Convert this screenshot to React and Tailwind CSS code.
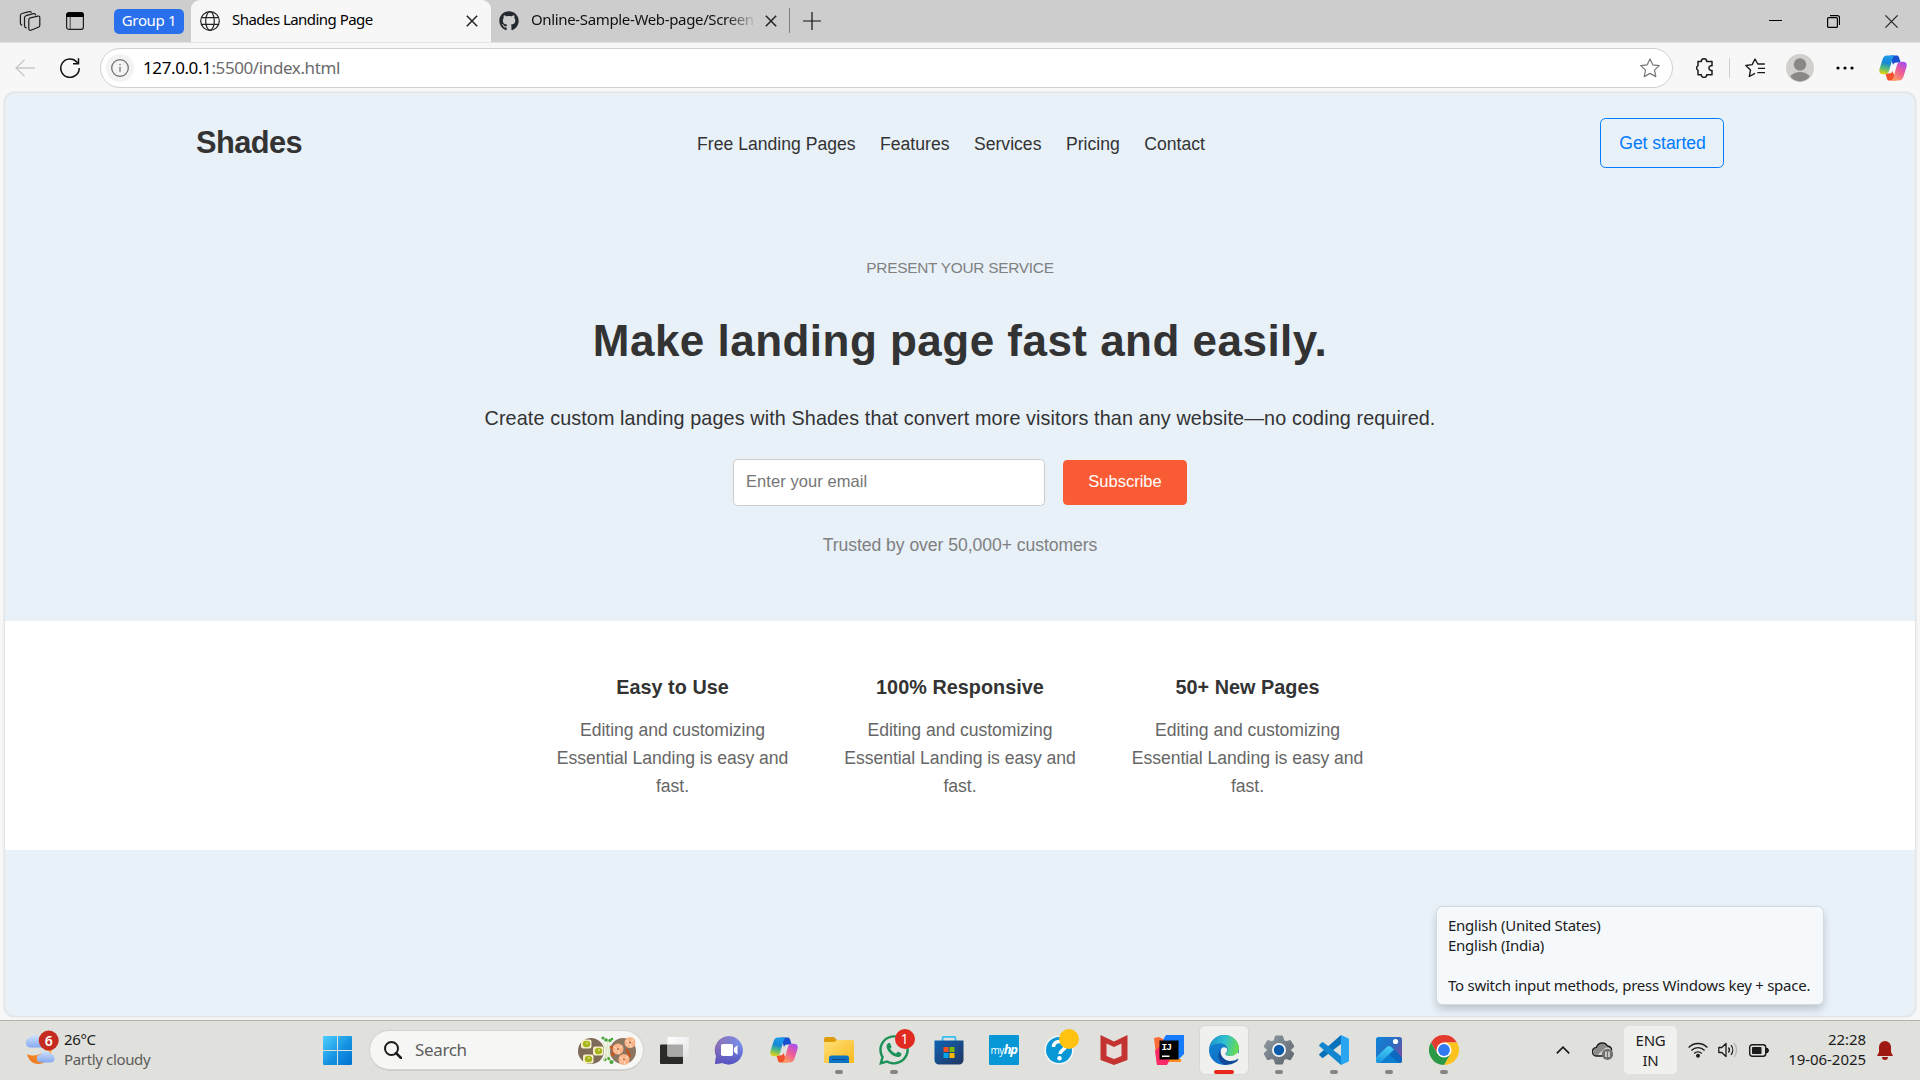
import React from "react";
import { FaWhatsapp, FaGithub } from "react-icons/fa";

function CopilotIcon({ id, className }) {
  return (
    <svg viewBox="0 0 28 26" className={className}>
      <defs>
        <linearGradient id={id + "a"} x1=".3" y1="0" x2="0.1" y2="1">
          <stop offset="0" stopColor="#1b9be8" />
          <stop offset=".35" stopColor="#1787d6" />
          <stop offset=".62" stopColor="#4fb884" />
          <stop offset="1" stopColor="#f6d600" />
        </linearGradient>
        <linearGradient id={id + "b"} x1=".8" y1="0" x2=".2" y2="1">
          <stop offset="0" stopColor="#a64df0" />
          <stop offset=".45" stopColor="#ec5a9b" />
          <stop offset="1" stopColor="#ffa35e" />
        </linearGradient>
      </defs>
      <path d="M11 .5h6.500c1.300 0 2.100.6 2.500 1.800l1.600 5.200h-4c-2 0-3 .8-3.600 2.500z" fill="#1a4fd0" />
      <path d="M17 25.500h-6.500c-1.300 0-2.100-.6-2.500-1.800L6.400 18.500H10c2 0 3-.8 3.600-2.500z" fill="#f4502c" />
      <path d="M8 .5h8.200c-1.700.5-2.300 2-2.900 4L10.200 15.500c-.8 2.500-2 3.700-4.400 3.700H4.500C.8 19.200-.3 17.300.5 14L3.500 4.500C4.400 2 5.600.5 8 .5z" fill={`url(#${id}a)`} />
      <path d="M20 25.500h-8.200c1.700-.5 2.300-2 2.900-4l3.100-11c.8-2.500 2-3.700 4.400-3.700h1.300c3.700 0 4.800 1.900 4 5.200l-3 9.500c-.9 2.500-2.100 4-4.500 4z" fill={`url(#${id}b)`} />
    </svg>
  );
}

const CloseIcon = () => (
  <svg viewBox="0 0 12 12" className="h-3 w-3 shrink-0" stroke="#222" strokeWidth="1.500" fill="none">
    <path d="M.8.8l10.400 10.400M11.200.8L.8 11.200" />
  </svg>
);

function TabStrip() {
  return (
    <div className="flex h-[42px] items-start bg-[#cdcdcd]">
      <div className="flex h-[42px] w-[191px] items-center bg-[#cdcdcd]">
        <svg viewBox="0 0 22 22" className="ml-[19px] h-[22px] w-[22px]" fill="none" stroke="#1c1c1c" strokeWidth="1.200" strokeLinejoin="round" strokeLinecap="round">
          <path d="M10.500 8.200l8.400-2.100c1.200-.3 1.900.3 1.900 1.400v7.800c0 1-.5 1.700-1.500 2L12 20.200c-1.300.4-2.200-.2-2.200-1.500v-8.500c0-1 .2-1.700.7-2z" />
          <path d="M16.500 4.800c-.2-1-.9-1.400-2-1.100L7 5.700c-1 .3-1.500.9-1.500 1.900v8.200c0 1 .6 1.700 1.700 2" />
          <path d="M12.200 2.500c-.3-.8-1-1.200-2-.9L3 3.500C1.900 3.800 1.400 4.500 1.400 5.500v7.700c0 1 .5 1.600 1.400 1.900" />
        </svg>
        <svg viewBox="0 0 18 18" className="ml-[25px] h-[18px] w-[18px]">
          <rect x=".6" y=".6" width="16.800" height="16.800" rx="2.500" fill="none" stroke="#1c1c1c" strokeWidth="1.200" />
          <path d="M.2 3a2.800 2.800 0 012.800-2.800h12a2.800 2.800 0 012.800 2.800v2H.2z" fill="#000" />
          <path d="M4.200 5v12.500" stroke="#444" strokeWidth="1" />
        </svg>
        <div className="ml-[30px] flex h-[25px] w-[70px] items-center justify-center rounded-[5px] bg-[#2a6fec] pb-px font-['Noto_Sans',sans-serif] text-[15px] tracking-[-0.35px] whitespace-nowrap text-white">Group 1</div>
      </div>
      <div className="flex h-[42px] w-[300px] shrink-0 items-center rounded-t-[9px] bg-[#f7f7f7] pb-px">
        <svg viewBox="0 0 20 20" className="ml-[9px] h-5 w-5" fill="none" stroke="#222" strokeWidth="1.200">
          <circle cx="10" cy="10" r="9.300" />
          <ellipse cx="10" cy="10" rx="4.300" ry="9.300" />
          <path d="M1.500 6.700h17M1.500 13.300h17" />
        </svg>
        <div className="ml-3 w-[234px] pb-[2px] font-['Noto_Sans',sans-serif] text-[15px] tracking-[-0.54px] whitespace-nowrap text-black">Shades Landing Page</div>
        <CloseIcon />
      </div>
      <div className="flex h-[41px] items-center">
        <FaGithub className="ml-2 h-5 w-5 text-[#24292f]" />
        <div className="ml-3 w-[224px] overflow-hidden pb-[2px] font-['Noto_Sans',sans-serif] text-[15px] tracking-[-0.35px] whitespace-nowrap text-[#111] [mask-image:linear-gradient(to_right,black_195px,transparent_226px)]">Online-Sample-Web-page/Screen</div>
        <div className="ml-[10px]"><CloseIcon /></div>
        <div className="ml-3 h-[25px] w-px bg-[#808080]" />
        <svg viewBox="0 0 18 18" className="ml-[13px] h-[18px] w-[18px]" stroke="#111" strokeWidth="1.200"><path d="M9 0v18M0 9h18" /></svg>
      </div>
      <div className="ml-auto flex h-[42px] items-center gap-[45px] pr-[22px]">
        <svg viewBox="0 0 13 13" className="h-[13px] w-[13px]" stroke="#000"><path d="M0 5.500h13" /></svg>
        <svg viewBox="0 0 13 13" className="h-[13px] w-[13px]" stroke="#000" strokeWidth="1.200" fill="none">
          <rect x=".6" y="2.600" width="9.800" height="9.800" rx="1" />
          <path d="M3 .6h7.500a2 2 0 012 2V10" />
        </svg>
        <svg viewBox="0 0 13 13" className="h-[13px] w-[13px]" stroke="#222" strokeWidth="1.200"><path d="M.4.4l12.200 12.200M12.600.4L.4 12.600" /></svg>
      </div>
    </div>
  );
}

function Toolbar() {
  return (
    <div className="flex h-[51px] items-center border-t border-[#e4e4e4] bg-[#f7f7f7]">
      <svg viewBox="0 0 20 18" className="ml-[15px] h-[18px] w-5" fill="none" stroke="#c8c8c8" strokeWidth="1.300"><path d="M20 9H1M9.500.7L1 9l8.500 8.300" /></svg>
      <svg viewBox="0 0 20 20" className="ml-[25px] h-5 w-5" fill="none" stroke="#111" strokeWidth="1.500">
        <path d="M19.200 10A9.200 9.200 0 1117 4.200L18.300 5.600" />
        <path d="M18.500.3v5.500H13" />
      </svg>
      <div className="ml-5 flex h-10 w-[1573px] items-center rounded-full border border-[#cfcfcf] bg-white">
        <div className="ml-[5px] flex h-7 w-7 items-center justify-center rounded-full bg-[#f3f3f3]">
          <svg viewBox="0 0 18 18" className="h-[18px] w-[18px]" fill="none" stroke="#6a6a6a" strokeWidth="1.200">
            <circle cx="9" cy="9" r="8.300" /><path d="M9 7.800v5M9 4.900v1.300" />
          </svg>
        </div>
        <div className="ml-[9px] font-['Noto_Sans',sans-serif] text-[17px] tracking-[-0.4px] whitespace-nowrap text-[#6b6b6b]"><span className="text-black">127.0.0.1</span>:5500/index.html</div>
        <svg viewBox="0 0 20 20" className="mr-[12px] ml-auto h-5 w-5" fill="none" stroke="#777" strokeWidth="1.200" strokeLinejoin="round">
          <path d="M10 .9l2.800 5.900 6.500.8-4.800 4.500 1.300 6.500L10 15.400l-5.800 3.200 1.300-6.500L.7 7.600l6.500-.8z" />
        </svg>
      </div>
      <svg viewBox="0 0 20 20" className="ml-[21px] h-5 w-5 shrink-0" fill="none" stroke="#1b1b1b" strokeWidth="1.500" strokeLinejoin="round">
        <path d="M4 3.500h3.300a2.700 2.700 0 015.400 0H18v4.200h-1.200a2.400 2.400 0 000 4.700H18v4.300h-5.300a2.700 2.700 0 01-5.400 0H4v-4.300a2.700 2.700 0 010-4.700z" />
      </svg>
      <div className="ml-[15px] h-5 w-px bg-[#cfcfcf]" />
      <svg viewBox="0 0 20 20" className="ml-[15px] h-5 w-5 shrink-0" fill="none" stroke="#1b1b1b" strokeWidth="1.400" strokeLinejoin="round">
        <path d="M19.800 6H12.800L10 1 7.200 6.600.8 7.500l4.700 4.600-1.200 6.400L10 15.400" />
        <path d="M13 10.400h7M12.300 14.600H20" />
      </svg>
      <svg viewBox="0 0 28 28" className="ml-[21px] h-7 w-7 shrink-0">
        <circle cx="14" cy="14" r="14" fill="#d2d0cd" />
        <circle cx="14" cy="10.500" r="6.200" fill="#8b8785" />
        <path d="M4.300 22.500c2-3 5.500-4.500 9.700-4.500s7.700 1.500 9.700 4.500A14 14 0 0114 27.500a14 14 0 01-9.700-5z" fill="#8b8785" />
      </svg>
      <svg viewBox="0 0 18 4" className="ml-[22px] h-1 w-[18px]"><circle cx="2" cy="2" r="1.600" /><circle cx="9" cy="2" r="1.600" /><circle cx="16" cy="2" r="1.600" /></svg>
      <CopilotIcon id="tb" className="ml-[25px] h-[26px] w-7" />
    </div>
  );
}

function Card({ title }) {
  return (
    <div className="w-[242px] text-center">
      <h3 className="text-[19.8px] leading-8 font-bold tracking-[0.05px] text-[#333]">{title}</h3>
      <p className="mt-[13px] text-[17.6px] leading-[28.16px] tracking-[-0.04px] text-[#666]">Editing and customizing Essential Landing is easy and fast.</p>
    </div>
  );
}

function WebPage() {
  return (
    <div className="mx-[5px] h-[923px] overflow-hidden rounded-[10px] bg-[#e8f0f8] font-['Liberation_Sans',Arial,sans-serif] text-[#333] shadow-[0_0_0_1px_#e2e4e6,0_0_2px_1px_#d4d4d4]">
      <header className="flex h-[100px] items-center justify-between px-[191px]">
        <div className="text-[30.8px] font-bold tracking-[-0.6px]">Shades</div>
        <nav className="flex gap-[24.500px] pt-[3px] text-[17.6px] text-[#333]">
          <a>Free Landing Pages</a><a>Features</a><a>Services</a><a>Pricing</a><a>Contact</a>
        </nav>
        <button className="h-[50px] w-[124px] rounded-[5.500px] border border-[#007bff] pl-px text-[17.6px] tracking-[-0.05px] whitespace-nowrap text-[#007bff]">Get started</button>
      </header>
      <main className="flex h-[428px] flex-col items-center pt-[63px]">
        <p className="text-[15.4px] leading-6 tracking-[-0.25px] text-[#808080]">PRESENT YOUR SERVICE</p>
        <h1 className="mt-[31px] text-[44px] leading-[60px] font-bold tracking-[0.48px]">Make landing page fast and easily.</h1>
        <p className="mt-[31px] text-[19.8px] leading-8 tracking-[0.105px]">Create custom landing pages with Shades that convert more visitors than any website—no coding required.</p>
        <div className="mt-[25px] flex items-center gap-[18px]">
          <input placeholder="Enter your email" className="h-[47px] w-[312px] rounded-[4.400px] border border-[#ccc] bg-white px-3 pb-[3px] text-[16.5px] tracking-[0.07px] placeholder:text-[#757575]" />
          <button className="h-[45px] w-[124px] rounded-[4.400px] bg-[#f95c35] pb-[2px] text-[16.5px] text-white">Subscribe</button>
        </div>
        <p className="mt-[25px] text-[17.6px] leading-7 tracking-[-0.06px] text-[#808080]">Trusted by over 50,000+ customers</p>
      </main>
      <section className="flex h-[229px] justify-center gap-[45.500px] bg-white pt-[50px]">
        <Card title="Easy to Use" /><Card title="100% Responsive" /><Card title="50+ New Pages" />
      </section>
    </div>
  );
}

function TaskbarApp({ children, run, active }) {
  return (
    <div className="flex h-[60px] w-[55px] shrink-0 items-center justify-center">
      <div className={active ? "relative flex h-12 w-12 items-center justify-center rounded-[5px] bg-[#f0f0ee] shadow-[0_0_0_1px_#d8d8d6]" : "relative flex h-12 w-12 items-center justify-center"}>
        {children}
        {run && <div className="absolute bottom-0 left-5 h-1 w-2 rounded-full bg-[#868583]" />}
        {active && <div className="absolute bottom-0 left-[14px] h-1 w-5 rounded-full bg-[#e8281c]" />}
      </div>
    </div>
  );
}

function Taskbar() {
  const ic = "h-[30px] w-[30px]";
  return (
    <footer className="flex h-[60px] items-center bg-[#e0e0dc] font-['Noto_Sans',sans-serif] shadow-[inset_0_1px_0_#b3b1af]">
      <div className="flex w-[310px] items-center">
        <svg viewBox="0 0 36 36" className="mb-1 ml-[24px] h-9 w-9">
          <defs>
            <linearGradient id="cl" x1="0" y1="0" x2="0" y2="1"><stop offset="0" stopColor="#d3e3fb" /><stop offset="1" stopColor="#86aaf0" /></linearGradient>
            <linearGradient id="mo" x1="0" y1="1" x2="1" y2="0"><stop offset="0" stopColor="#ee6c1c" /><stop offset="1" stopColor="#fbb831" /></linearGradient>
          </defs>
          <path d="M3 24c4 2.500 12 2 17-2.500 2-2 2.500-4.500 2-7h5c2.500 11-4.500 19.500-12.500 19.500C8.500 34 4.500 30 3 24z" fill="url(#mo)" />
          <path d="M6 17.500a4.800 4.800 0 01-.2-9.500A6 6 0 0117 9.500a4 4 0 011 8z" fill="url(#cl)" />
          <path d="M17 32.500a4 4 0 01-.2-8 5.200 5.200 0 0110-.5 4.300 4.300 0 01.2 8.500z" fill="url(#cl)" />
          <circle cx="24.700" cy="10.500" r="10" fill="#c52b1f" />
          <text x="24.700" y="15.800" fontSize="14" fontWeight="600" fill="white" textAnchor="middle" fontFamily="Noto Sans">6</text>
        </svg>
        <div className="mb-[3px] ml-1 text-[15px] leading-5 tracking-[-0.35px] whitespace-nowrap text-[#1b1b1b]">
          <div>26°C</div><div className="text-[#5c5c5a]">Partly cloudy</div>
        </div>
      </div>
      <div className="flex w-[54px] justify-center">
        <svg viewBox="0 0 29 29" className="h-[29px] w-[29px]">
          <defs><linearGradient id="win" x1="0" y1="0" x2="1" y2="1"><stop offset="0" stopColor="#4fcfff" /><stop offset=".55" stopColor="#1593e2" /><stop offset="1" stopColor="#0071d0" /></linearGradient></defs>
          <path d="M1 0h13v14H0V1a1 1 0 011-1zM15 0h13a1 1 0 011 1v13H15zM0 15h14v14H1a1 1 0 01-1-1zM15 15h14v13a1 1 0 01-1 1H15z" fill="url(#win)" />
        </svg>
      </div>
      <div className="flex w-[282px] items-center">
        <div className="ml-[6px] flex h-[38px] w-[273px] items-center rounded-full bg-[#f6f6f4] shadow-[0_0_0_1px_#d4d3cf,0_1.500px_0_#bab9b5]">
          <svg viewBox="0 0 18 18" className="ml-[14px] h-[18px] w-[18px]" fill="none" stroke="#1b1b1b" strokeWidth="2"><circle cx="7.500" cy="7.500" r="6.500" /><path d="M12 12l5 5" strokeWidth="2.500" strokeLinecap="round" /></svg>
          <div className="ml-[13px] text-[17px] tracking-[-0.35px] text-[#5e5e5c]">Search</div>
          <svg viewBox="0 0 60 30" className="mr-[6px] ml-auto h-[30px] w-[60px]">
            <circle cx="14" cy="16" r="13" fill="#7d6a57" /><circle cx="46" cy="16" r="13" fill="#8a7560" />
            <path d="M29 3c5 6-2 12 1 18 1 3 3 5 5 7" stroke="#dce9c4" strokeWidth="1.500" fill="none" />
            <g fill="#4aa53c"><circle cx="26" cy="3" r="1.600" /><circle cx="29" cy="5" r="1.800" /><circle cx="33" cy="5.500" r="1.700" /><circle cx="35" cy="4" r="1.300" /><circle cx="28" cy="24.500" r="1.700" /><circle cx="34.500" cy="27" r="2" /><circle cx="32" cy="23.500" r="1.700" /></g>
            <path d="M26 8c4 6 4 12 1 17M33 9c-2 6-1 12 1 15" stroke="#dce9c4" strokeWidth="1.500" fill="none" />
            {[[9, 9], [21, 16], [11, 24]].map(([x, y]) => (
              <g key={x}><rect x={x - 5} y={y - 4.500} width="10.500" height="9" rx="2" fill="#f5edc6" /><ellipse cx={x + .5} cy={y} rx="3.700" ry="3.200" fill="#a4b51c" /><circle cx={x + 1} cy={y - 1} r="1" fill="#dfe46a" /></g>
            ))}
            <path d="M34 12l3 4M50 15l3 6M35 20l3-3" stroke="#c8521f" strokeWidth="2.500" strokeLinecap="round" />
            {[[41, 14], [53, 7.500], [47, 24.500]].map(([x, y]) => (
              <g key={x}><circle cx={x} cy={y} r="5.500" fill="#fab488" /><path d={`M${x} ${y}l4-3M${x} ${y}l-4-2M${x} ${y}l1 5M${x} ${y}l-4 3`} stroke="#ffe1c6" strokeWidth="1" /><circle cx={x} cy={y} r="1" fill="#b45a30" /></g>
            ))}
          </svg>
        </div>
      </div>

      <TaskbarApp>
        <svg viewBox="0 0 30 30" className={ic}>
          <defs><linearGradient id="tv" x1="0" y1="0" x2="1" y2="1"><stop offset="0" stopColor="#fff" /><stop offset="1" stopColor="#e3e3e3" /></linearGradient></defs>
          <rect x="1" y="9.500" width="23" height="19.500" rx="1" fill="#2a2a29" />
          <rect x="8.500" y="2" width="22" height="19.500" rx="1" fill="url(#tv)" /><path d="M8.500 9.500H24v12H9.500a1 1 0 01-1-1z" fill="#a9a9a8" />
        </svg>
      </TaskbarApp>
      <TaskbarApp>
        <svg viewBox="0 0 30 30" className={ic}>
          <defs><linearGradient id="tm" x1="0" y1="0" x2="1" y2="0"><stop offset="0" stopColor="#8f6fb2" /><stop offset="1" stopColor="#7690ee" /></linearGradient><linearGradient id="tm2" x1="0" y1="0" x2="0" y2="1"><stop offset=".3" stopColor="#5552c2" stopOpacity="0" /><stop offset="1" stopColor="#5552c2" /></linearGradient></defs>
          <path d="M15 1a14.200 14.200 0 11-6.500 27L1 29l1-8A14.200 14.200 0 0115 1z" fill="url(#tm)" />
          <path d="M15 1a14.200 14.200 0 11-6.500 27L1 29l1-8A14.200 14.200 0 0115 1z" fill="url(#tm2)" />
          <rect x="7" y="9" width="12" height="12" rx="1.800" fill="white" /><path d="M20 13l3.500-2.800v9.600L20 17z" fill="white" />
        </svg>
      </TaskbarApp>
      <TaskbarApp><CopilotIcon id="tk" className="h-[26px] w-7" /></TaskbarApp>
      <TaskbarApp run>
        <svg viewBox="0 0 30 30" className={ic}>
          <defs><linearGradient id="fo" x1="0" y1="0" x2="1" y2="1"><stop offset="0" stopColor="#ffe07a" /><stop offset="1" stopColor="#fab91b" /></linearGradient></defs>
          <path d="M0 4a2 2 0 012-2h8l3 3h5v5H0z" fill="#dd9d0b" />
          <path d="M0 7h10l3-2h15.500A1.500 1.500 0 0130 6.500V27a1 1 0 01-1 1H1a1 1 0 01-1-1z" fill="url(#fo)" />
          <path d="M5 28v-5a2.500 2.500 0 012.500-2.500h15A2.500 2.500 0 0125 23v5z" fill="#0f73c4" /><path d="M8 24.500h14" stroke="#0b4c8b" strokeWidth="1" />
        </svg>
      </TaskbarApp>
      <TaskbarApp run>
        <FaWhatsapp className="h-[34px] w-[34px] text-[#1c9158]" />
        <div className="absolute top-[3px] left-[25px] flex h-5 w-5 items-center justify-center rounded-full bg-[#e12a20] text-[13.500px] text-white">1</div>
      </TaskbarApp>
      <TaskbarApp>
        <svg viewBox="0 0 30 30" className={ic}>
          <defs><linearGradient id="st" x1="0" y1="0" x2="1" y2="1"><stop offset="0" stopColor="#0d63b5" /><stop offset="1" stopColor="#22355f" /></linearGradient></defs>
          <path d="M8.500 6V3a1.200 1.200 0 011.200-1.200h10.600A1.200 1.200 0 0121.500 3v3" fill="none" stroke="#35bdf0" strokeWidth="1.800" />
          <path d="M.5 5.500h29V25a4.500 4.500 0 01-4.500 4.500H5A4.500 4.500 0 01.5 25z" fill="url(#st)" />
          <path d="M9.500 12h5v5h-5z" fill="#f25022" /><path d="M15.500 12h5v5h-5z" fill="#7fba00" /><path d="M9.500 18h5v5h-5z" fill="#00a4ef" /><path d="M15.500 18h5v5h-5z" fill="#ffb900" />
        </svg>
      </TaskbarApp>
      <TaskbarApp>
        <div className="flex h-[30px] w-[30px] items-baseline justify-center rounded-[1px] bg-[#0897d6] font-['Open_Sans',sans-serif] text-white">
          <span className="text-[10px] leading-[29px] tracking-[-0.5px]">my</span><span className="text-[13px] leading-[29px] font-bold tracking-[-1.500px] italic">hp</span>
        </div>
      </TaskbarApp>
      <TaskbarApp>
        <svg viewBox="0 0 30 30" className={ic}><circle cx="15" cy="15" r="14.500" fill="#f4f8fa" /><circle cx="15" cy="15" r="13" fill="#0797d7" />
          <path d="M9.500 12c0-3.500 2.500-5.500 6-5.500s6 1.800 6 4.600c0 3.700-5.500 3.900-5.500 7.900" fill="none" stroke="white" strokeWidth="3.600" /><circle cx="15.500" cy="23.300" r="2.200" fill="white" /></svg>
        <div className="absolute top-[3px] left-[24px] h-5 w-5 rounded-full bg-[#ffc20e]" />
      </TaskbarApp>
      <TaskbarApp>
        <svg viewBox="0 0 30 30" className={ic}>
          <path d="M1.500 0L15 6.500 28.500 0v25L15 30 1.500 25z" fill="#c23331" /><path d="M7.500 8.500L15 12l7.500-3.500V21L15 24l-7.500-3z" fill="#e6dcd9" />
        </svg>
      </TaskbarApp>
      <TaskbarApp>
        <svg viewBox="0 0 30 30" className={ic}>
          <path d="M0 3l5-1 8 4v23H3z" fill="#fb6b35" /><path d="M1 16l6-6 10 13-4 7H3z" fill="#fb2a66" /><path d="M12 0h18v19l-5 5-16-5V5z" fill="#167cfb" /><path d="M15 24h12v3H15z" fill="#ff8b1e" />
          <rect x="5.500" y="5.500" width="19" height="19" /><path d="M8 20.500h7.500v1.500H8z" fill="white" />
          <text x="7.500" y="15" fontSize="9.500" fontWeight="700" fill="white" fontFamily="Liberation Mono" letterSpacing="-1">IJ</text>
        </svg>
      </TaskbarApp>
      <TaskbarApp active>
        <svg viewBox="0 0 30 30" className={ic}>
          <defs>
            <linearGradient id="e1" x1="0" y1=".3" x2="1" y2=".5"><stop offset="0" stopColor="#1b96cf" /><stop offset=".5" stopColor="#30bfd0" /><stop offset="1" stopColor="#6bdd4b" /></linearGradient>
            <linearGradient id="e2" x1="0" y1="0" x2=".5" y2="1"><stop offset="0" stopColor="#1687d0" /><stop offset="1" stopColor="#0d6fc9" /></linearGradient>
          </defs>
          <circle cx="15" cy="15" r="15" fill="url(#e2)" />
          <path d="M.5 12C2 5 8 0 15.500 0 24 0 30 6.500 30 13c0 5-3.500 8-8 8-4 0-5.500-1.500-5-2.500 1.500-1.700 2-3 1.500-5C17.800 10.500 15 8.500 11 8.500 6 8.500 2.500 10 .5 12z" fill="url(#e1)" />
          <path d="M18 13.500c.5 2-.1 3.300-1.500 5-.5 1 1 2.500 5 2.500 3 0 5.500-1.200 7-3.500l1.500 1-2 6.500c-2 1.500-5 2-8 1.200-6-1.500-9-6.500-8.500-10C12 13 14.500 11 18 13.500z" fill="#f0f0ee" />
          <path d="M11.500 14.500c-.8 6 3 11.500 9.500 11.500 3.500 0 6-1 7.500-2 .8-.4 1 0 .7.800C27 28 22 30 16 30c-4-1.500-7-6-6.500-10 .2-2.500 1-4.500 2-5.500z" fill="#114a99" />
        </svg>
      </TaskbarApp>
      <TaskbarApp run>
        <svg viewBox="0 0 30 30" className={ic}>
          <defs><linearGradient id="ge" x1="0" y1="0" x2="1" y2="1"><stop offset="0" stopColor="#8f9aa3" /><stop offset="1" stopColor="#5c646d" /></linearGradient></defs>
          <path d="M11.500 1h7l1.200 4.400 2.300 1.300 4.300-1.200L30 11.500l-3.300 3.200v.8l3.300 3.100-3.600 6.200-4.400-1.300-2.300 1.300L18.500 29h-7l-1.200-4.200L8 23.500l-4.400 1.300L0 18.600l3.300-3.100v-.8L0 11.500l3.700-6L8 6.700l2.300-1.300z" fill="url(#ge)" stroke="url(#ge)" strokeLinejoin="round" />
          <circle cx="15" cy="15" r="7" fill="#f1f4f7" /><circle cx="15" cy="15" r="5.200" fill="#0d5cab" />
        </svg>
      </TaskbarApp>
      <TaskbarApp run>
        <svg viewBox="0 0 30 30" className={ic}>
          <path d="M22 0v9L4.500 22.500c-.6.500-1.300.5-1.800 0L.6 20.600c-.6-.6-.6-1.300 0-1.900z" fill="#0a72bb" />
          <path d="M22 30v-9L4.500 7.500c-.6-.5-1.300-.5-1.800 0L.6 9.400c-.6.600-.6 1.300 0 1.900z" fill="#1287d0" />
          <path d="M22 0l6.700 3c.8.4 1.300 1 1.300 2v20c0 1-.5 1.600-1.300 2L22 30z" fill="#29a5f1" />
        </svg>
      </TaskbarApp>
      <TaskbarApp run>
        <svg viewBox="0 0 30 30" className={ic}>
          <defs><linearGradient id="ph" x1="0" y1="0" x2="1" y2=".6"><stop offset="0" stopColor="#0c86da" /><stop offset=".6" stopColor="#2a6cc4" /><stop offset="1" stopColor="#6a53a8" /></linearGradient><linearGradient id="ph2" x1="0" y1="0" x2="0" y2="1"><stop offset="0" stopColor="#4cd0f5" /><stop offset="1" stopColor="#1693e0" /></linearGradient></defs>
          <rect x="2" y="2" width="26" height="26" rx="2.500" fill="url(#ph)" />
          <path d="M15 11.500c1-.5 2-.2 3 .8L28 22.500v3a2.500 2.500 0 01-2.500 2.500H22L10 17z" fill="#0b69c0" />
          <path d="M2 22.500L12.800 12c1.500-1.500 3-1.500 4.500 0l2.700 2.700L6.500 28h-2A2.500 2.500 0 012 25.500z" fill="url(#ph2)" />
          <path d="M6.500 28l9-9 8.500 9z" fill="#0d7fd3" />
          <circle cx="21.500" cy="6.500" r="2.600" fill="white" />
        </svg>
      </TaskbarApp>
      <TaskbarApp run>
        <svg viewBox="0 0 30 30" className={ic}>
          <path d="M2 7.500A15 15 0 0128 7.500H15L8.500 18.800z" fill="#e33b2e" />
          <path d="M28 7.500A15 15 0 0115 30l6.500-11.200L15 7.500z" fill="#fcc31e" />
          <path d="M2 7.500A15 15 0 0015 30l6.500-11.200h-13z" fill="#2a9a47" />
          <circle cx="15" cy="15" r="7.500" fill="white" /><circle cx="15" cy="15" r="5.900" fill="#3079ee" />
        </svg>
      </TaskbarApp>

      <div className="ml-auto flex items-center">
        <svg viewBox="0 0 14 8" className="h-2 w-[14px]" fill="none" stroke="#1b1b1b" strokeWidth="1.700"><path d="M.8 7.300L7 1.200l6.200 6.100" /></svg>
        <svg viewBox="0 0 21 18" className="mt-[2px] ml-[22px] h-[18px] w-[21px]">
          <path d="M5 13.500A4.200 4.200 0 014.500 5.300 6 6 0 0115.500 4a4.800 4.800 0 014 5v4.500z" fill="#8c8b89" />
          <path d="M5 13.500l9-8c4-.5 6 1.500 6 4.500v3.500z" fill="#d8d8d5" /><path d="M11 14H5A4.200 4.200 0 014.500 5.300 6 6 0 0115.500 4a4.800 4.800 0 014.200 4.500" fill="none" stroke="#1b1b1b" strokeWidth="1.300" />
          <circle cx="15.500" cy="12.300" r="5.600" fill="#72716f" /><path d="M14 9.500v5.500M17 9.500v5.500" stroke="white" strokeWidth="1.200" />
        </svg>
        <div className="ml-[11px] flex h-12 w-[53px] flex-col items-center justify-center rounded-[5px] bg-[#f0f0ee] pb-px text-[15px] leading-5 tracking-[-0.3px] text-[#1b1b1b]"><span>ENG</span><span>IN</span></div>
        <svg viewBox="0 0 20 16" className="ml-[11px] h-4 w-5" fill="none" stroke="#1b1b1b" strokeWidth="1.300">
          <path d="M.6 5.500a13 13 0 0118.800 0M3.400 8.500a9.200 9.200 0 0113.200 0M6.200 11.500a5.300 5.300 0 017.600 0" /><circle cx="10" cy="13.800" r="1.300" fill="#1b1b1b" />
        </svg>
        <svg viewBox="0 0 21 16" className="ml-[10px] h-4 w-[21px]" fill="none" stroke="#1b1b1b" strokeWidth="1.300" strokeLinejoin="round">
          <path d="M.8 5.500h3L8 1.500v13l-4.200-4h-3z" /><path d="M10.500 5.500a4 4 0 010 5M13 3.200a7.500 7.500 0 010 9.600" /><path d="M16 1a11 11 0 010 14" stroke="#b5b4b1" />
        </svg>
        <svg viewBox="0 0 20 13" className="ml-[10px] h-[13px] w-5"><rect x=".7" y=".7" width="16" height="11.600" rx="2.500" fill="none" stroke="#1b1b1b" strokeWidth="1.400" /><rect x="3" y="3" width="9.500" height="7" rx=".8" fill="#1b1b1b" /><path d="M17.500 4l1.500.8c.7.400.7 3 0 3.400l-1.500.8z" fill="#1b1b1b" stroke="#1b1b1b" /></svg>
        <div className="mb-[3px] ml-[9px] w-[88px] text-right text-[15px] leading-5 tracking-[-0.05px] whitespace-nowrap text-[#1b1b1b]"><div>22:28</div><div>19-06-2025</div></div>
        <svg viewBox="0 0 16 19" className="mr-[27px] ml-[11px] h-[19px] w-4" fill="#a01812"><path d="M8 0a6 6 0 016 6v5l2 4H0l2-4V6a6 6 0 016-6zM5 16h6a3 3 0 01-6 0z" /></svg>
      </div>
    </footer>
  );
}

export default function App() {
  return (
    <div className="relative flex h-[1080px] w-[1920px] flex-col overflow-hidden bg-[#f7f7f7]">
      <TabStrip />
      <Toolbar />
      <WebPage />
      <div className="mt-auto"><Taskbar /></div>
      <div className="absolute top-[907px] left-[1437px] h-[97px] w-[386px] rounded-[5px] bg-[#f5f9fc] pt-[8px] pl-[11px] font-['Noto_Sans',sans-serif] text-[15px] leading-5 tracking-[-0.25px] whitespace-nowrap text-[#1b1b1b] shadow-[0_0_0_1px_#d3dbe1,0_5px_10px_rgba(0,0,0,0.2)]">
        <div>English (United States)</div>
        <div>English (India)</div>
        <div className="mt-5">To switch input methods, press Windows key + space.</div>
      </div>
    </div>
  );
}
